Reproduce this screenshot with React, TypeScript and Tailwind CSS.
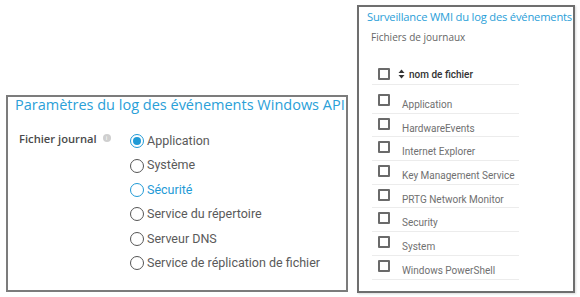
import { useState } from "react";

const LOG_OPTIONS = [
  "Application",
  "Système",
  "Sécurité",
  "Service du répertoire",
  "Serveur DNS",
  "Service de réplication de fichier",
];

const WMI_FILES = [
  "Application",
  "HardwareEvents",
  "Internet Explorer",
  "Key Management Service",
  "PRTG Network Monitor",
  "Security",
  "System",
  "Windows PowerShell",
];

function Radio({ checked, focused }: { checked: boolean; focused: boolean }) {
  const ring = checked || focused ? "border-[#1f9ad6]" : "border-[#555]";
  return (
    <span
      className={`flex h-[14px] w-[14px] shrink-0 items-center justify-center rounded-full border-[1.5px] ${ring}`}
    >
      {checked && <span className="h-[8px] w-[8px] rounded-full bg-[#1f9ad6]" />}
    </span>
  );
}

function Checkbox() {
  return (
    <span className="block h-[12px] w-[12px] shrink-0 rounded-[1px] border-2 border-[#6a6a6a]" />
  );
}

function SortIcon() {
  return (
    <svg width="7" height="10" viewBox="0 0 7 10" className="shrink-0">
      <path d="M3.5 0.5 L6.5 4 L0.5 4 Z" fill="#333" />
      <path d="M3.5 9.5 L6.5 6 L0.5 6 Z" fill="#333" />
    </svg>
  );
}

export default function App() {
  const [selected, setSelected] = useState("Application");

  return (
    <div className="flex h-[297px] w-[580px] items-start bg-white pl-[6px] pt-[5px]">
      <section className="mt-[90px] h-[197px] w-[342px] border-2 border-[#7c7c7c] pl-[7px]">
        <h1 className="mt-[-1px] whitespace-nowrap font-['Open_Sans',sans-serif] text-[14.5px] leading-[17px] text-[#2aa0d8]">
          Paramètres du log des événements Windows API
        </h1>

        <div className="mt-[16px] flex">
          <div className="flex w-[115px] shrink-0 items-start gap-[6px] pl-[4px] pt-[3px]">
            <span className="font-['Open_Sans',sans-serif] text-[11.2px] font-semibold leading-[14px] text-[#4a4a4a]">
              Fichier journal
            </span>
            <span className="mt-[2px] flex h-[8px] w-[8px] items-center justify-center rounded-full bg-[#cfcfcf] text-[6px] leading-none text-white">
              i
            </span>
          </div>
          <ul className="flex flex-col">
            {LOG_OPTIONS.map((opt) => (
              <li key={opt}>
                <button
                  type="button"
                  onClick={() => setSelected(opt)}
                  className="flex h-[24.4px] items-center gap-[3px] font-['Roboto',sans-serif] text-[12.5px] leading-none"
                >
                  <Radio checked={selected === opt} focused={opt === "Sécurité"} />
                  <span className={opt === "Sécurité" ? "text-[#1f9ad6]" : "text-[#5a5a5a]"}>
                    {opt}
                  </span>
                </button>
              </li>
            ))}
          </ul>
        </div>
      </section>

      <section className="ml-[9px] h-[288px] w-[218px] border-2 border-[#6e6e6e] pl-[8px] shadow-[1px_1px_2px_rgba(0,0,0,0.15)]">
        <h2 className="mt-[2px] whitespace-nowrap font-['Open_Sans',sans-serif] text-[11.2px] leading-[16px] tracking-[-0.2px] text-[#2aa0d8]">
          Surveillance WMI du log des événements
        </h2>
        <p className="mt-[6px] pl-[4px] font-['Open_Sans',sans-serif] text-[10px] leading-[13px] text-[#666]">
          Fichiers de journaux
        </p>

        <div className="ml-[5px] mt-[24px] w-[147px]">
          <div className="flex h-[17px] items-start border-b border-[#ececec] pl-[6px]">
            <Checkbox />
            <span className="ml-[8px] mt-[1px]">
              <SortIcon />
            </span>
            <span className="ml-[4px] mt-[1px] font-['Roboto',sans-serif] text-[10px] font-medium leading-[12px] text-[#333]">
              nom de fichier
            </span>
          </div>
          <ul className="pt-[5px]">
            {WMI_FILES.map((f) => (
              <li
                key={f}
                className="flex h-[23.7px] items-start border-b border-[#ececec] pl-[6px]"
              >
                <span className="mt-[4px]">
                  <Checkbox />
                </span>
                <span className="ml-[12px] mt-[9px] font-['Roboto',sans-serif] text-[10px] leading-[12px] text-[#707070]">
                  {f}
                </span>
              </li>
            ))}
          </ul>
        </div>
      </section>
    </div>
  );
}
